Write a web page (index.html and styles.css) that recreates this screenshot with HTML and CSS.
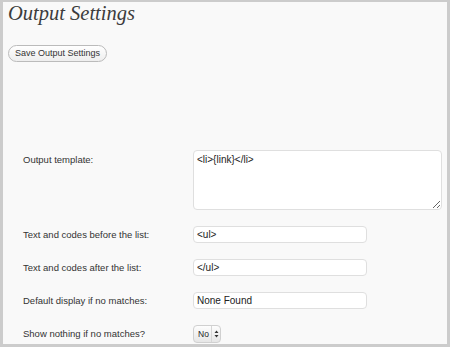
FILE: index.html
```html
<!DOCTYPE html>
<html lang="en">
<head>
    <meta charset="UTF-8">
    <title>Output Settings</title>
    <link rel="stylesheet" href="styles.css">
</head>
<body>
    <div class="frame">
        <h2>Output Settings</h2>
        <div class="actions">
            <button class="save-btn" type="button">Save Output Settings</button>
        </div>

        <div class="settings">
            <div class="row row-tall">
                <label>Output template:</label>
                <textarea class="field-area">&lt;li&gt;{link}&lt;/li&gt;</textarea>
            </div>
            <div class="row">
                <label>Text and codes before the list:</label>
                <input class="field" type="text" value="<ul>">
            </div>
            <div class="row">
                <label>Text and codes after the list:</label>
                <input class="field" type="text" value="</ul>">
            </div>
            <div class="row">
                <label>Default display if no matches:</label>
                <input class="field" type="text" value="None Found">
            </div>
            <div class="row">
                <label>Show nothing if no matches?</label>
                <div class="select">
                    <span>No</span>
                    <span class="arrows">
                        <svg width="5" height="8" viewBox="0 0 5 8"><path d="M2.5 0.5 L4.5 3 H0.5 Z M2.5 7.5 L4.5 5 H0.5 Z" fill="#333"/></svg>
                    </span>
                </div>
            </div>
        </div>
    </div>
</body>
</html>
```

FILE: styles.css
```css
* {
    margin: 0;
    padding: 0;
    box-sizing: border-box;
}

body {
    font-family: "Liberation Sans", Arial, sans-serif;
    background: #fff;
}

.frame {
    width: 450px;
    height: 347px;
    background: #f9f9f9;
    border-style: solid;
    border-color: #cccccc;
    border-width: 2px 3px 3px 3px;
    padding: 0 0 0 5px;
}

h2 {
    font-family: "Liberation Serif", Georgia, serif;
    font-style: italic;
    font-weight: normal;
    font-size: 20.5px;
    line-height: 22px;
    color: #3c3c3c;
}

.actions {
    margin-top: 18px;
}

.save-btn {
    font-family: "Liberation Sans", sans-serif;
    font-size: 9px;
    color: #333;
    height: 17px;
    padding: 0 6px;
    border: 1px solid #bbbbbb;
    border-radius: 9px;
    background: linear-gradient(#ffffff, #eeeeee);
}

.settings {
    margin-top: 88px;
    padding-left: 15px;
    display: flex;
    flex-direction: column;
    gap: 16px;
}

.row {
    display: grid;
    grid-template-columns: 170px 1fr;
    align-items: center;
    font-size: 9.5px;
    color: #333;
}

.row-tall {
    align-items: start;
}

.row-tall label {
    padding-top: 4px;
}

.field-area {
    width: 249px;
    height: 60px;
    border: 1px solid #dfdfdf;
    border-radius: 4px;
    background: #fff;
    font-family: "Liberation Sans", sans-serif;
    font-size: 10px;
    color: #222;
    padding: 3px 3px;
    resize: vertical;
}

.field {
    width: 174px;
    height: 17px;
    border: 1px solid #dfdfdf;
    border-radius: 4px;
    background: #fff;
    font-family: "Liberation Sans", sans-serif;
    font-size: 10px;
    color: #222;
    padding: 0 3px;
}

.select {
    width: 28px;
    height: 18px;
    display: flex;
    align-items: center;
    justify-content: space-between;
    border: 1px solid #d0d0d0;
    border-radius: 4px;
    background: linear-gradient(#fdfdfd, #e6e6e6);
    font-size: 8.5px;
    color: #222;
    padding-left: 4px;
}

.arrows {
    display: flex;
    align-items: center;
    justify-content: center;
    width: 9px;
    height: 100%;
    border-left: 1px solid #d6d6d6;
}
```
